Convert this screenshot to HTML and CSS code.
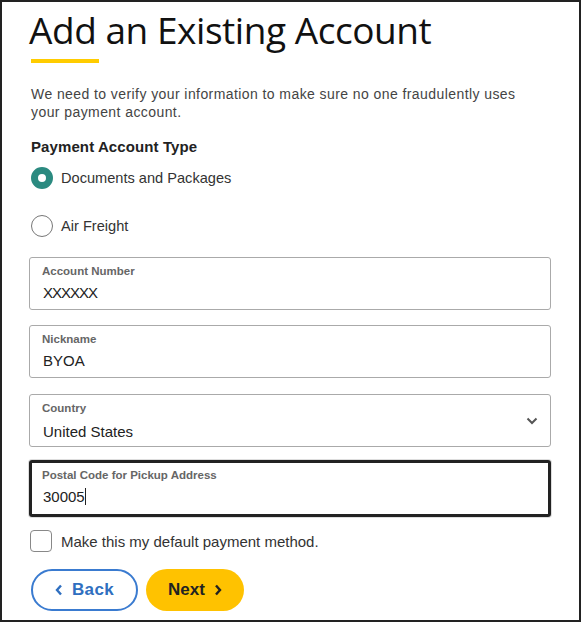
FILE: index.html
```html
<!DOCTYPE html>
<html lang="en">
<head>
<meta charset="utf-8">
<title>Add an Existing Account</title>
<link rel="stylesheet" href="styles.css">
</head>
<body>
<div class="frame">
  <h1 class="title">Add an Existing Account</h1>
  <div class="title-rule"></div>
  <p class="intro">We need to verify your information to make sure no one fraudulently uses your payment account.</p>
  <div class="section-label">Payment Account Type</div>
  <div class="radio-row">
    <span class="radio radio-on"></span>
    <span class="radio-text">Documents and Packages</span>
  </div>
  <div class="radio-row">
    <span class="radio"></span>
    <span class="radio-text">Air Freight</span>
  </div>
  <div class="field">
    <div class="field-label">Account Number</div>
    <div class="field-value field-masked">XXXXXX</div>
  </div>
  <div class="field">
    <div class="field-label">Nickname</div>
    <div class="field-value">BYOA</div>
  </div>
  <div class="field field-select">
    <div class="field-label">Country</div>
    <div class="field-value">United States</div>
    <svg class="chevron" width="12" height="8" viewBox="0 0 12 8"><path d="M1.5 1.5 L6 6 L10.5 1.5" fill="none" stroke="#555" stroke-width="2"/></svg>
  </div>
  <div class="field field-focus">
    <div class="field-label">Postal Code for Pickup Address</div>
    <div class="field-value">30005<span class="caret"></span></div>
  </div>
  <div class="check-row">
    <span class="checkbox"></span>
    <span class="check-text">Make this my default payment method.</span>
  </div>
  <div class="actions">
    <button class="btn btn-back"><svg width="8" height="12" viewBox="0 0 8 12"><path d="M6 1.5 L2 6 L6 10.5" fill="none" stroke="#2f6fc0" stroke-width="2.4"/></svg>Back</button>
    <button class="btn btn-next">Next<svg width="8" height="12" viewBox="0 0 8 12"><path d="M2 1.5 L6 6 L2 10.5" fill="none" stroke="#222" stroke-width="2.4"/></svg></button>
  </div>
</div>
</body>
</html>
```
FILE: styles.css
```css
html, body {
  margin: 0;
  padding: 0;
  background: #fff;
}
.frame {
  width: 581px;
  height: 622px;
  box-sizing: border-box;
  border: 2px solid #222;
  padding: 0 28px 0 27px;
  font-family: "Liberation Sans", Arial, sans-serif;
  color: #333;
  overflow: hidden;
}
.title {
  margin: 4px 0 0 0;
  font-family: "Open Sans", sans-serif;
  font-weight: 400;
  font-size: 37px;
  line-height: 48px;
  color: #111;
  letter-spacing: -0.45px;
}
.title-rule {
  width: 68px;
  height: 4px;
  background: #ffcc00;
  margin: 5px 0 0 2px;
}
.intro {
  max-width: 500px;
  margin: 22px 0 0 2px;
  font-size: 14px;
  line-height: 18px;
  color: #444;
  letter-spacing: 0.42px;
}
.section-label {
  margin: 17px 0 0 2px;
  font-size: 15px;
  font-weight: 700;
  color: #222;
  line-height: 18px;
  letter-spacing: 0.1px;
}
.radio-row {
  display: flex;
  align-items: center;
  gap: 8px;
  height: 24px;
  margin: 10px 0 0 2px;
}
.radio-row + .radio-row {
  margin-top: 24px;
}
.radio {
  width: 22px;
  height: 22px;
  box-sizing: border-box;
  border-radius: 50%;
  border: 1.5px solid #777;
  background: #fff;
}
.radio-on {
  border: 7px solid #2b8a80;
  background: #fff;
}
.radio-text {
  font-size: 14.6px;
  color: #333;
}
.field {
  position: relative;
  height: 53px;
  box-sizing: border-box;
  border: 1px solid #aaa;
  border-radius: 3px;
  padding: 7px 12px 0 12px;
  margin-top: 15px;
}
.radio-row + .field {
  margin-top: 19px;
}
.field-label {
  font-size: 11.5px;
  font-weight: 700;
  color: #666;
  line-height: 13px;
}
.field-value {
  font-size: 15px;
  color: #222;
  margin: 5px 0 0 1px;
  line-height: 20px;
}
.field-masked {
  letter-spacing: -1px;
}
.field-select {
  margin-top: 16px;
}
.field-select .field-value {
  margin-top: 7px;
}
.chevron {
  position: absolute;
  right: 12px;
  top: 22px;
}
.field-focus {
  height: 57px;
  margin-top: 13px;
  border: 3px solid #222;
  padding: 6px 10px 0 10px;
  box-shadow: 0 0 0 1px #ddd;
}
.field-focus .field-value {
  margin-top: 5px;
}
.caret {
  display: inline-block;
  width: 1px;
  height: 17px;
  background: #222;
  vertical-align: -3px;
}
.check-row {
  display: flex;
  align-items: center;
  gap: 9px;
  margin: 13px 0 0 1px;
}
.checkbox {
  width: 22px;
  height: 22px;
  box-sizing: border-box;
  border: 1.5px solid #888;
  border-radius: 4px;
}
.check-text {
  font-size: 15px;
  color: #333;
}
.actions {
  display: flex;
  gap: 8px;
  margin: 17px 0 0 2px;
}
.btn {
  height: 42px;
  border-radius: 21px;
  font-family: "Liberation Sans", Arial, sans-serif;
  font-size: 17px;
  font-weight: 700;
  display: flex;
  align-items: center;
  justify-content: center;
  gap: 9px;
  padding: 0;
  cursor: pointer;
}
.btn-back {
  width: 107px;
  border: 2px solid #3a7bd0;
  background: #fff;
  color: #2f6fc0;
  letter-spacing: 0.4px;
}
.btn-next {
  width: 98px;
  border: none;
  background: #ffc200;
  color: #222;
}
```
